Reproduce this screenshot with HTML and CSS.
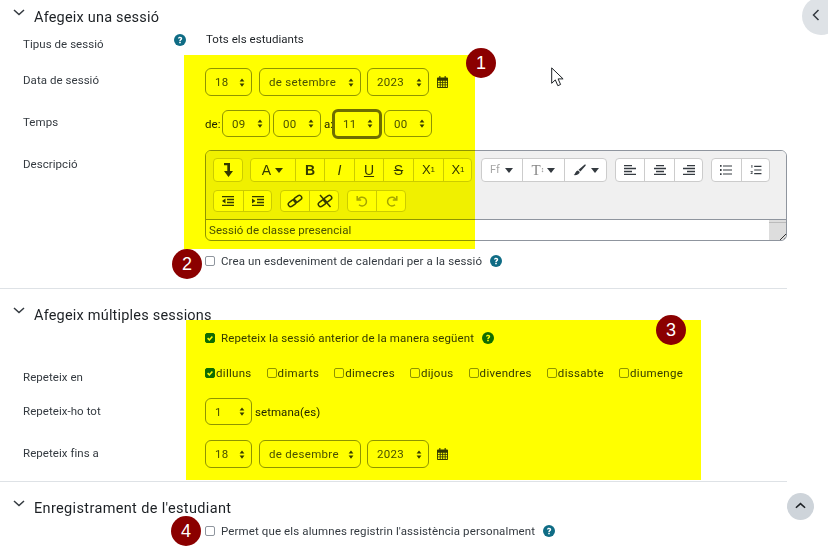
FILE: index.html
```html
<!DOCTYPE html>
<html lang="ca">
<head>
<meta charset="utf-8">
<title>Afegeix una sessió</title>
<link rel="stylesheet" href="styles.css">
</head>
<body>
<svg class="defs" width="0" height="0" aria-hidden="true">
  <symbol id="i-updown" viewBox="0 0 8 12"><path d="M4 .5 7.2 4.6H.8zM4 11.5.8 7.4h6.4z" fill="#343a40"/></symbol>
  <symbol id="i-cal" viewBox="0 0 12 13"><path fill="#343a40" fill-rule="evenodd" d="M2.5 0h1.2v1.5h4.6V0h1.2v1.5H11a1 1 0 0 1 1 1V12a1 1 0 0 1-1 1H1a1 1 0 0 1-1-1V2.500a1 1 0 0 1 1-1h1.500zM1 5v1.700h2V5zm3 0v1.700h1.700V5zm2.700 0v1.700h1.700V5zm2.700 0v1.700H11V5zM1 7.500v1.700h2V7.500zm3 0v1.700h1.700V7.500zm2.700 0v1.700h1.700V7.500zm2.700 0v1.700H11V7.500zM1 10v2h2v-2zm3 0v2h1.700v-2zm2.700 0v2h1.700v-2zm2.700 0v2H11v-2z"/></symbol>
  <symbol id="i-help" viewBox="0 0 12 12"><circle cx="6" cy="6" r="6" fill="#0f6c85"/><path d="M3.900 4.600C4 3.300 5 2.700 6.100 2.700c1.200 0 2.100.7 2.100 1.800 0 1.500-1.500 1.500-1.500 2.500H5.300c0-1.700 1.400-1.700 1.400-2.500 0-.4-.3-.6-.7-.6-.5 0-.7.300-.8.700zM5.200 7.700h1.600v1.500H5.200z" fill="#fff"/></symbol>
  <symbol id="i-caret" viewBox="0 0 8 5"><path d="M0 0h8L4 5z" fill="#343a40"/></symbol>
  <symbol id="i-chev" viewBox="0 0 12 7"><path d="M1 1l5 4.500L11 1" fill="none" stroke="#343a40" stroke-width="1.500"/></symbol>
  <symbol id="i-check" viewBox="0 0 10 10"><path d="M2 5.200l2.200 2.200L8 3" fill="none" stroke="#fff" stroke-width="2"/></symbol>
  <symbol id="i-dirs" viewBox="0 0 10 14"><path d="M1 0h6v8h3L5.500 14 1 8h3.300V2.300H1z" fill="#343a40"/></symbol>
  <symbol id="i-left" viewBox="0 0 12 10"><path d="M0 .5h8M0 3.500h12M0 6.500h8M0 9.500h12" stroke="#343a40" stroke-width="1.300"/></symbol>
  <symbol id="i-center" viewBox="0 0 12 10"><path d="M2 .5h8M0 3.500h12M2 6.500h8M0 9.500h12" stroke="#343a40" stroke-width="1.300"/></symbol>
  <symbol id="i-right" viewBox="0 0 12 10"><path d="M4 .5h8M0 3.500h12M4 6.500h8M0 9.500h12" stroke="#343a40" stroke-width="1.300"/></symbol>
  <symbol id="i-ul" viewBox="0 0 12 10"><path d="M3 1h9M3 5h9M3 9h9" stroke="#343a40" stroke-width="1.200"/><path d="M0 0h1.600v1.800H0zM0 4.100h1.600v1.800H0zM0 8.200h1.600V10H0z" fill="#343a40"/></symbol>
  <symbol id="i-ol" viewBox="0 0 12 11"><path d="M4 1.500h8M4 5.500h8M4 9.500h8" stroke="#343a40" stroke-width="1.200"/><path d="M1 0h1v3H1zM0 7h2.500v.8L1 9.300h1.600V10H0v-.7l1.600-1.600H0z" fill="#343a40"/></symbol>
  <symbol id="i-outdent" viewBox="0 0 12 10"><path d="M0 .5h12M5 3.500h7M5 6.500h7M0 9.500h12" stroke="#343a40" stroke-width="1.300"/><path d="M3.500 2.500v5L0 5z" fill="#343a40"/></symbol>
  <symbol id="i-indent" viewBox="0 0 12 10"><path d="M0 .5h12M5 3.500h7M5 6.500h7M0 9.500h12" stroke="#343a40" stroke-width="1.300"/><path d="M0 2.500v5L3.500 5z" fill="#343a40"/></symbol>
  <symbol id="i-link" viewBox="0 0 16 14"><g fill="none" stroke="#343a40" stroke-width="1.500"><rect x="1" y="6.800" width="8.400" height="4.800" rx="2.400" transform="rotate(-35 5.200 9.200)"/><rect x="6.600" y="2.400" width="8.400" height="4.800" rx="2.400" transform="rotate(-35 10.800 4.800)"/></g></symbol>
  <symbol id="i-unlink" viewBox="0 0 16 14"><g fill="none" stroke="#343a40" stroke-width="1.500"><rect x="1" y="6.800" width="8.400" height="4.800" rx="2.400" transform="rotate(-35 5.200 9.200)"/><rect x="6.600" y="2.400" width="8.400" height="4.800" rx="2.400" transform="rotate(-35 10.800 4.800)"/><path d="M3 1 13.500 13"/></g></symbol>
  <symbol id="i-undo" viewBox="0 0 12 12"><path d="M2.200 4.500A4.400 4.400 0 1 1 3 9.800M1.200 1v4h4" fill="none" stroke="#a6a6a6" stroke-width="1.500"/></symbol>
  <symbol id="i-redo" viewBox="0 0 12 12"><path d="M9.800 4.500A4.400 4.400 0 1 0 9 9.800M10.800 1v4h-4" fill="none" stroke="#a6a6a6" stroke-width="1.500"/></symbol>
  <symbol id="i-brush" viewBox="0 0 14 12"><path d="M13.500.2c.4.300.3.800 0 1.200L8 7.500 6 5.800 12.300.4c.400-.3.800-.4 1.200-.2zM5.400 6.500 7.300 8.100C7 10.500 4 12 .5 11.500 2.500 10.800 2.400 7 5.400 6.500z" fill="#343a40"/></symbol>
</svg>

<main class="page">
  <section class="fieldset">
    <h3 class="legend"><svg class="chev"><use href="#i-chev"/></svg>Afegeix una sessió</h3>
    <div class="row row-type">
      <div class="label label-type">Tipus de sessió<svg class="help help-end"><use href="#i-help"/></svg></div>
      <div class="static">Tots els estudiants</div>
    </div>
    <div class="row row-date">
      <div class="label">Data de sessió</div>
      <div class="controls">
        <div class="select s-day"><span>18</span><svg class="updown"><use href="#i-updown"/></svg></div>
        <div class="select s-month"><span>de setembre</span><svg class="updown"><use href="#i-updown"/></svg></div>
        <div class="select s-year"><span>2023</span><svg class="updown"><use href="#i-updown"/></svg></div>
        <svg class="cal"><use href="#i-cal"/></svg>
      </div>
    </div>
    <div class="row row-time">
      <div class="label">Temps</div>
      <div class="controls controls-time">
        <span class="de">de:</span>
        <div class="select s-time"><span>09</span><svg class="updown"><use href="#i-updown"/></svg></div>
        <div class="select s-time"><span>00</span><svg class="updown"><use href="#i-updown"/></svg></div>
        <span class="a">a:</span>
        <div class="select s-time focus"><span>11</span><svg class="updown"><use href="#i-updown"/></svg></div>
        <div class="select s-time"><span>00</span><svg class="updown"><use href="#i-updown"/></svg></div>
      </div>
    </div>
    <div class="row row-desc">
      <div class="label">Descripció</div>
      <div class="editor">
        <div class="toolbar">
          <div class="tb-row">
            <div class="grp grp-first"><div class="btn w30"><svg class="ic-dirs"><use href="#i-dirs"/></svg></div></div>
            <div class="grp grp-second">
              <div class="btn w45 big">A<svg class="caret"><use href="#i-caret"/></svg></div>
              <div class="btn w29 big b">B</div>
              <div class="btn w30 big i">I</div>
              <div class="btn w29 big u">U</div>
              <div class="btn w30 big s">S</div>
              <div class="btn w30 big sc">X<sub>1</sub></div>
              <div class="btn w29 big sc">X<sup>1</sup></div>
            </div>
            <div class="grp">
              <div class="btn w41 muted">Ff<svg class="caret"><use href="#i-caret"/></svg></div>
              <div class="btn w42 tall">T<small>↕</small><svg class="caret"><use href="#i-caret"/></svg></div>
              <div class="btn w43"><svg class="ic-brush"><use href="#i-brush"/></svg><svg class="caret"><use href="#i-caret"/></svg></div>
            </div>
            <div class="grp">
              <div class="btn w29"><svg class="ic"><use href="#i-left"/></svg></div>
              <div class="btn w30"><svg class="ic"><use href="#i-center"/></svg></div>
              <div class="btn w29"><svg class="ic"><use href="#i-right"/></svg></div>
            </div>
            <div class="grp">
              <div class="btn w30"><svg class="ic"><use href="#i-ul"/></svg></div>
              <div class="btn w29"><svg class="ic"><use href="#i-ol"/></svg></div>
            </div>
          </div>
          <div class="tb-row">
            <div class="grp">
              <div class="btn w30"><svg class="ic"><use href="#i-outdent"/></svg></div>
              <div class="btn w29"><svg class="ic"><use href="#i-indent"/></svg></div>
            </div>
            <div class="grp">
              <div class="btn w29"><svg class="ic-link"><use href="#i-link"/></svg></div>
              <div class="btn w30"><svg class="ic-link"><use href="#i-unlink"/></svg></div>
            </div>
            <div class="grp">
              <div class="btn w29"><svg class="ic-hist"><use href="#i-undo"/></svg></div>
              <div class="btn w30"><svg class="ic-hist"><use href="#i-redo"/></svg></div>
            </div>
          </div>
        </div>
        <div class="editarea">
          <span>Sessió de classe presencial</span>
          <div class="resize"></div>
        </div>
      </div>
    </div>
    <div class="row row-check">
      <div></div>
      <label class="check-line"><span class="check"></span>Crea un esdeveniment de calendari per a la sessió<svg class="help help-after"><use href="#i-help"/></svg></label>
    </div>
  </section>

  <section class="fieldset second">
    <h3 class="legend"><svg class="chev"><use href="#i-chev"/></svg>Afegeix múltiples sessions</h3>
    <div class="row row-repeat">
      <div></div>
      <label class="check-line"><span class="check on"><svg><use href="#i-check"/></svg></span>Repeteix la sessió anterior de la manera següent<svg class="help help-after"><use href="#i-help"/></svg></label>
    </div>
    <div class="row row-days">
      <div class="label">Repeteix en</div>
      <div class="days">
        <label class="day"><span class="check on"><svg><use href="#i-check"/></svg></span>dilluns</label>
        <label class="day"><span class="check"></span>dimarts</label>
        <label class="day"><span class="check"></span>dimecres</label>
        <label class="day"><span class="check"></span>dijous</label>
        <label class="day"><span class="check"></span>divendres</label>
        <label class="day"><span class="check"></span>dissabte</label>
        <label class="day"><span class="check"></span>diumenge</label>
      </div>
    </div>
    <div class="row row-every">
      <div class="label">Repeteix-ho tot</div>
      <div class="controls controls-every">
        <div class="select s-day"><span>1</span><svg class="updown"><use href="#i-updown"/></svg></div>
        <span>setmana(es)</span>
      </div>
    </div>
    <div class="row row-until">
      <div class="label">Repeteix fins a</div>
      <div class="controls">
        <div class="select s-day"><span>18</span><svg class="updown"><use href="#i-updown"/></svg></div>
        <div class="select s-month"><span>de desembre</span><svg class="updown"><use href="#i-updown"/></svg></div>
        <div class="select s-year"><span>2023</span><svg class="updown"><use href="#i-updown"/></svg></div>
        <svg class="cal"><use href="#i-cal"/></svg>
      </div>
    </div>
  </section>

  <section class="fieldset third">
    <h3 class="legend"><svg class="chev"><use href="#i-chev"/></svg>Enregistrament de l'estudiant</h3>
    <div class="row row-self">
      <div></div>
      <label class="check-line"><span class="check"></span>Permet que els alumnes registrin l'assistència personalment<svg class="help help-after"><use href="#i-help"/></svg></label>
    </div>
  </section>
</main>

<div class="marker marker-a"></div>
<div class="marker marker-b"></div>
<div class="badge badge-1">1</div>
<div class="badge badge-2">2</div>
<div class="badge badge-3">3</div>
<div class="badge badge-4">4</div>

<svg class="cursor" viewBox="0 0 13 20"><path d="M.7.900v15.400l3.600-3.400 2.500 5.800 2.800-1.200-2.500-5.600h5z" fill="#fff" stroke="#1d2125" stroke-width="1"/></svg>
<div class="drawer-toggle"><svg viewBox="0 0 8 12"><path d="M6.500 1 1.500 6l5 5" fill="none" stroke="#343a40" stroke-width="1.500"/></svg></div>
<div class="to-top"><svg viewBox="0 0 12 7"><path d="M1 6l5-4.500L11 6" fill="none" stroke="#1d2125" stroke-width="1.700"/></svg></div>
</body>
</html>
```

FILE: styles.css
```css
* { box-sizing: border-box; }
html, body { margin: 0; padding: 0; }
body {
  width: 828px;
  height: 558px;
  overflow: hidden;
  position: relative;
  background: #fff;
  color: #1d2125;
  font: 11.5px/14px Roboto, "Liberation Sans", sans-serif;
  letter-spacing: .05px;
}
.defs { position: absolute; }
.page { width: 787px; }

.fieldset { border-bottom: 1px solid #dee2e6; height: 289px; padding-top: 6px; }
.second { height: 193px; padding-top: 15px; }
.third { border-bottom: 0; height: 76px; padding-top: 15px; }

.legend {
  display: flex;
  align-items: center;
  height: 24px;
  margin: 0;
  font-size: 14.500px;
  font-weight: 400;
  letter-spacing: .2px;
  position: relative;
  padding-left: 34px;
}
.third .legend { letter-spacing: .35px; }
.chev { position: absolute; left: 13px; top: 3px; width: 12px; height: 7px; }

.row { display: grid; grid-template-columns: 205px 1fr; }
.label { padding-left: 23px; position: relative; color: #343a40; }
.help { width: 12px; height: 12px; flex: none; }
.help-end { position: absolute; left: 174px; top: 2px; }
.help-after { margin-left: 8px; }

.row-type { height: 26px; padding-top: 2px; }
.label-type { padding-top: 5px; }
.static { color: #1d2125; padding-left: 1px; }

.row-date { height: 54px; padding-top: 12px; }
.row-date .label { padding-top: 5px; }
.row-until .label { padding-top: 6px; }
.row-time { height: 40px; }
.row-time .label { padding-top: 5px; }
.row-desc { height: 104px; }
.row-desc .label { padding-top: 7px; }
.row-check { height: 14px; }

.controls { display: flex; align-items: center; gap: 7px; height: 28px; }
.controls-time { gap: 3px; height: 27px; }
.de { width: 14px; }
.a { width: 8px; margin-right: -3px; overflow: hidden; }
.controls-every { gap: 3px; height: 27px; }

.select {
  display: flex;
  align-items: center;
  justify-content: space-between;
  height: 100%;
  border: 1px solid #8f959e;
  border-radius: 6px;
  color: #495057;
  padding: 0 6px 0 9px;
  background: #fff;
  font-size: 11.500px;
  letter-spacing: .3px;
}
.s-day { width: 47px; }
.s-month { width: 102px; margin-right: -1px; }
.s-year { width: 62px; }
.s-time { width: 48px; }
.s-time.focus { width: 50px; height: 30px; border: 3px solid #6e6e00; margin-right: -1px; padding: 0 6px 0 8px; }
.updown { width: 6px; height: 9px; }
.cal { width: 11px; height: 12px; margin-left: 1px; }

.editor {
  width: 582px;
  height: 91px;
  border: 1px solid #8f959e;
  border-radius: 6px;
  overflow: hidden;
  background: #fff;
}
.toolbar {
  height: 69px;
  background: #f0f0f0;
  border-bottom: 1px solid #8f959e;
  padding: 7px 7px 0;
  display: flex;
  flex-direction: column;
  gap: 8px;
}
.tb-row { display: flex; gap: 8px; height: 24px; }
.tb-row + .tb-row { height: 22px; }
.grp {
  display: flex;
  background: #fff;
  border: 1px solid #ccc;
  border-radius: 4px;
}
.grp-first { margin-right: -1px; }
.grp-second { margin-right: 1px; }
.btn {
  display: flex;
  align-items: center;
  justify-content: center;
  gap: 5px;
  color: #343a40;
  border-left: 1px solid #ccc;
  height: 100%;
}
.btn:first-child { border-left: 0; margin-left: -1px; }
.btn:last-child { margin-right: -1px; }
.w29 { width: 29px; }
.w30 { width: 30px; }
.w41 { width: 41px; }
.w42 { width: 42px; }
.w43 { width: 43px; }
.w45 { width: 45px; }
.big { font-size: 14px; letter-spacing: 0; font-family: "Liberation Sans", sans-serif; gap: 4px; }
.sc { gap: 0; font-size: 13px; }
.b { font-weight: 700; }
.i { font-style: italic; }
.u { text-decoration: underline; }
.s { text-decoration: line-through; }
.big sub, .big sup { font-size: 8px; line-height: 0; }
.muted { color: #a6a6a6; font-size: 11px; }
.tall { font-family: "Liberation Serif", serif; font-size: 15px; color: #888; gap: 3px; }
.tall small { font-size: 7px; margin-left: -3px; color: #777; }
.caret { width: 8px; height: 5px; }
.ic { width: 12px; height: 10px; }
.ic-dirs { width: 10px; height: 14px; }
.ic-brush { width: 13px; height: 12px; }
.ic-link { width: 16px; height: 14px; }
.ic-hist { width: 12px; height: 12px; }

.editarea {
  display: flex;
  justify-content: space-between;
  height: 20px;
  padding-left: 3px;
  line-height: 20px;
  color: #495057;
}
.resize {
  width: 17px;
  height: 20px;
  margin-top: 0;
  background:
    linear-gradient(#bbb, #bbb) 0 2px / 100% 1px no-repeat,
    linear-gradient(135deg, transparent 68%, #333 69%, #333 73%, transparent 74%, transparent 82%, #333 83%, #333 87%, transparent 88%) 100% 100% / 10px 10px no-repeat,
    #ddd;
}

.check-line, .day { display: flex; align-items: center; color: #343a40; }
.check-line { letter-spacing: .12px; }
.day { letter-spacing: .3px; }
.check {
  display: inline-flex;
  flex: none;
  width: 10px;
  height: 10px;
  border: 1px solid #8f959e;
  border-radius: 2px;
  background: #fff;
  margin-right: 6px;
}
.check.on { border-color: #0f6cbf; background: #0f6cbf; }
.check svg { width: 8px; height: 8px; }

.row-repeat { height: 14px; margin-top: 3px; }
.row-days { margin-top: 16px; height: 14px; }
.row-days .label { padding-top: 9px; }
.days { display: flex; gap: 15px; }
.day .check { margin-right: 1px; }
.row-every { margin-top: 23px; height: 27px; }
.row-every .label { padding-top: 6px; }
.row-until { margin-top: 15px; height: 28px; }
.row-self { margin-top: 3px; }

.marker { position: absolute; background: #ff0; mix-blend-mode: multiply; }
.marker-a { left: 184px; top: 55px; width: 291px; height: 194px; }
.marker-b { left: 186px; top: 320px; width: 515px; height: 160px; }

.badge {
  position: absolute;
  width: 30px;
  height: 30px;
  border-radius: 50%;
  background: #8b0000;
  color: #fff;
  font: 18px/30px "Liberation Sans", sans-serif;
  text-align: center;
}
.badge-1 { left: 466px; top: 48px; }
.badge-2 { left: 172px; top: 249px; }
.badge-3 { left: 656px; top: 315px; }
.badge-4 { left: 171px; top: 516px; }

.cursor { position: absolute; left: 551px; top: 67px; width: 13px; height: 20px; }
.drawer-toggle {
  position: absolute;
  left: 802px;
  top: -3px;
  width: 38px;
  height: 38px;
  border-radius: 50%;
  background: #dee2e6;
}
.drawer-toggle svg { position: absolute; left: 10px; top: 12px; width: 8px; height: 12px; }
.to-top {
  position: absolute;
  left: 787px;
  top: 493px;
  width: 27px;
  height: 27px;
  border-radius: 50%;
  background: #ced4da;
}
.to-top svg { position: absolute; left: 8px; top: 9px; width: 11px; height: 7px; }
```
